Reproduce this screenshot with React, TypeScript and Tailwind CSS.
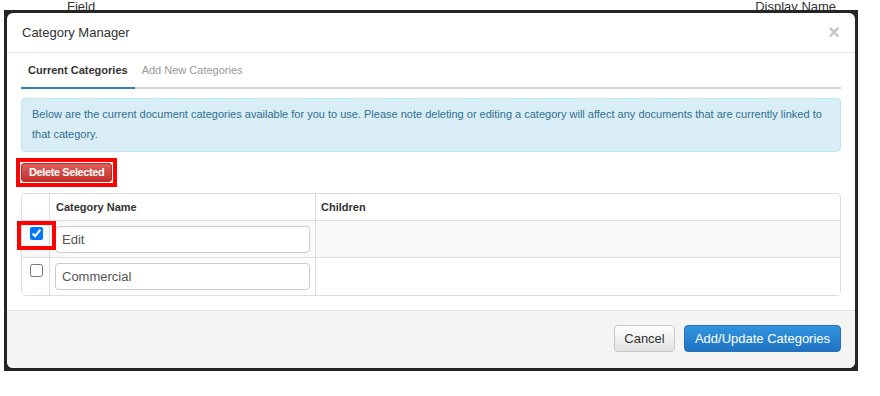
import React from "react";

const rows = [
  { id: 1, name: "Edit", checked: true, striped: true },
  { id: 2, name: "Commercial", checked: false, striped: false },
];

const App: React.FC = () => {
  return (
    <div className="w-[880px] h-[396px] bg-white overflow-hidden font-['Liberation_Sans',Arial,sans-serif]">
      {/* page behind the overlay, mostly hidden */}
      <div className="h-[10px] overflow-hidden flex text-[13px] leading-[13px] text-[#333]">
        <span className="ml-[67px]">Field</span>
        <span className="ml-[660px]">Display Name</span>
      </div>

      <div className="ml-[4px] w-[854px] h-[361px] bg-[#252525] pt-[3px] pl-[3px]">
        <div className="w-[848px] h-[355px] bg-white rounded-[6px] overflow-hidden flex flex-col">
          {/* header */}
          <div className="h-[40px] flex items-center justify-between pl-[15px] pr-[15px] border-b border-[#e5e5e5]">
            <h4 className="text-[13px] text-[#333]">Category Manager</h4>
            <span className="text-[20px] font-bold leading-none text-[#c4c4c4] -mt-[1px]">×</span>
          </div>

          {/* body */}
          <div className="flex-1 px-[14px] pt-[1px]">
            <div className="flex border-b-2 border-[#d6d6d6] h-[35px] text-[11px]">
              <div className="-mb-[2px] border-b-2 border-[#3b7fb8] px-[7px] flex items-center font-bold text-[#333]">
                Current Categories
              </div>
              <div className="px-[7px] flex items-center text-[#999]">Add New Categories</div>
            </div>

            <div className="mt-[9px] h-[54px] rounded-[4px] border border-[#bce8f1] bg-[#d9edf7] px-[10px] pt-[5px] text-[11px] leading-[20px] text-[#31708f]">
              Below are the current document categories available for you to use. Please note deleting or editing a
              category will affect any documents that are currently linked to
              <br />
              that category.
            </div>

            <div className="mt-[6px] -ml-[5px] w-fit flex border-[4px] border-[#ff0000] p-px">
              <button className="h-[19px] px-[7px] rounded-[3px] border border-[#b92c28] bg-gradient-to-b from-[#dd5f5b] to-[#c0302c] text-[11px] font-bold tracking-[-0.4px] text-white leading-none">
                Delete Selected
              </button>
            </div>

            <div className="mt-[6px] border border-[#ddd] rounded-[4px] text-[11px] text-[#333]">
              <div className="flex h-[27px] border-b border-[#ddd]">
                <div className="w-[28px] border-r border-[#ddd]"></div>
                <div className="w-[266px] border-r border-[#ddd] px-[6px] flex items-center font-bold">Category Name</div>
                <div className="flex-1 px-[5px] flex items-center font-bold">Children</div>
              </div>
              {rows.map((row, i) => (
                <div
                  key={row.id}
                  className={
                    "flex h-[37px] " +
                    (i < rows.length - 1 ? "border-b border-[#ddd] " : "") +
                    (row.striped ? "bg-[#f9f9f9]" : "bg-white")
                  }
                >
                  <div className="relative w-[28px] border-r border-[#ddd] pl-[8px] pt-[6px]">
                    <input type="checkbox" defaultChecked={row.checked} className="m-0 w-[13px] h-[13px] block" />
                    {row.checked && (
                      <div className="absolute left-[-5px] top-[0px] w-[39px] h-[29px] border-[4px] border-[#ff0000]"></div>
                    )}
                  </div>
                  <div className="w-[266px] border-r border-[#ddd] pl-[5px] flex items-center">
                    <input
                      readOnly
                      value={row.name}
                      className="w-[255px] h-[27px] border border-[#ccc] rounded-[4px] bg-white px-[6px] text-[13px] text-[#555] outline-none"
                    />
                  </div>
                  <div className="flex-1"></div>
                </div>
              ))}
            </div>
          </div>

          {/* footer */}
          <div className="h-[58px] bg-[#f4f4f4] border-t border-[#e5e5e5] flex justify-end items-start pt-[14px] pr-[14px] gap-[9px]">
            <button className="h-[27px] w-[61px] rounded-[4px] border border-[#c8c8c8] bg-gradient-to-b from-white to-[#e2e2e2] text-[13px] text-[#333]">
              Cancel
            </button>
            <button className="h-[27px] w-[157px] rounded-[4px] border border-[#2a6fb3] bg-gradient-to-b from-[#3295e0] to-[#1f73c2] text-[13px] text-white">
              Add/Update Categories
            </button>
          </div>
        </div>
      </div>
    </div>
  );
};

export default App;
